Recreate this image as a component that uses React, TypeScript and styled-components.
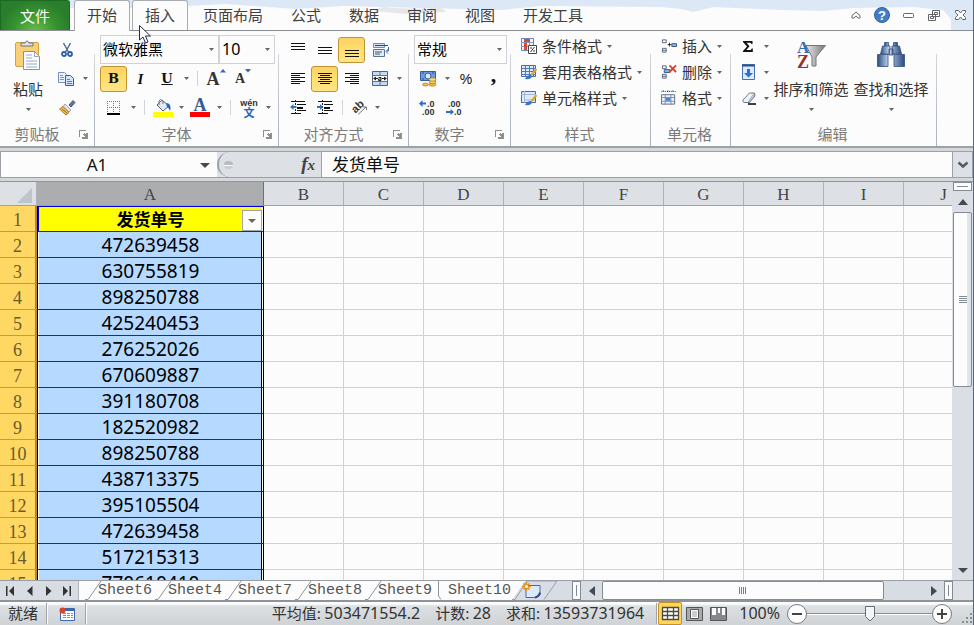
import React from "react";
import styled, { createGlobalStyle, css } from "styled-components";

const ui = `"Noto Sans CJK SC", sans-serif`;
const latin = `"Noto Sans", "Noto Sans CJK SC", sans-serif`;

const Global = createGlobalStyle`
  * { box-sizing: border-box; }
  body { margin: 0; background: #fcfcfc; color: #333; font: 15px/20px ${ui}; overflow: hidden; }
  button, input, select { font: inherit; color: inherit; margin: 0; padding: 0; border: 0; background: none; border-radius: 0; outline: 0; }
  svg { display: block; flex: none; overflow: visible; }
`;

const Window = styled.div`
  display: flex;
  flex-direction: column;
  height: 100vh;
  border-right: 1px solid #5d6678;
  background: #d5d8db;
`;

/* ---------- tab strip ---------- */
const TabStrip = styled.header`
  position: relative;
  display: flex;
  align-items: stretch;
  flex: none;
  height: 31px;
  background: #fcfcfc;
  border-bottom: 1px solid #8b8f94;
`;
const Sky = styled.svg`
  position: absolute;
  inset: 0;
  width: 100%;
  height: 30px;
`;
const FileTab = styled.button`
  position: relative;
  width: 70px;
  margin-right: 3px;
  color: #fff;
  border: 1px solid #1c6a22;
  border-bottom: 0;
  border-radius: 0 3px 0 0;
  background: radial-gradient(ellipse at 50% 110%, #6cc14b 0, #36932f 45%, #2a7d2c 75%);
`;
const RibbonTab = styled.button<{ $look?: "active" | "hover" }>`
  position: relative;
  margin: 0 1px -1px;
  padding: 0 12px 2px;
  border: 1px solid transparent;
  border-bottom: 0;
  color: #404040;
  white-space: nowrap;
  ${(p) => p.$look && css`
    border-color: #a9adb2;
    border-radius: 3px 3px 0 0;
    background: #fcfcfc;
  `}
  ${(p) => p.$look === "hover" && css`
    margin-bottom: 0;
    padding-bottom: 1px;
  `}
`;
const Pointer = styled.svg`
  position: absolute;
  left: 6px;
  top: 24px;
  z-index: 5;
`;
const WindowTools = styled.div`
  position: relative;
  display: flex;
  align-items: center;
  margin-left: auto;
`;
const WindowButton = styled.button`
  display: grid;
  place-items: center;
  width: 26px;
  height: 28px;
`;

/* ---------- ribbon ---------- */
const Ribbon = styled.section`
  display: flex;
  flex: none;
  height: 117px;
  background: #fcfcfc;
  border-bottom: 2px solid #9da1a5;
`;
const Group = styled.div<{ $w: number }>`
  display: flex;
  flex-direction: column;
  flex: 0 0 ${(p) => p.$w}px;
  min-width: 0;
  border-right: 1px solid;
  border-image: linear-gradient(transparent 20%, #d3d6da 21%, #a9b1bb 100%) 1;
`;
const GroupBody = styled.div`
  display: flex;
  height: 92px;
  padding: 2px 0 0 5px;
`;
const GroupFoot = styled.div`
  display: flex;
  align-items: center;
  height: 24px;
  padding-right: 2px;
  color: #7a7a7a;
  text-align: center;
  white-space: nowrap;
`;
const GroupTitle = styled.span`
  flex: 1;
`;
const Stack = styled.div<{ $top?: number }>`
  display: flex;
  flex-direction: column;
  padding-top: ${(p) => p.$top ?? 2}px;
`;
const ToolRow = styled.div<{ $h?: number }>`
  display: flex;
  align-items: center;
  height: ${(p) => p.$h ?? 29}px;
`;
const Tool = styled.button<{ $w?: number; $on?: boolean }>`
  display: grid;
  place-items: center;
  flex: none;
  width: ${(p) => p.$w ?? 27}px;
  height: 26px;
  color: #111;
  ${(p) => p.$on && css`
    border: 1px solid #c29233;
    border-radius: 3px;
    background: linear-gradient(#fbd267, #ffdf6d 50%, #ffe48a);
  `}
`;
const Divider = styled.i<{ $w?: number }>`
  flex: none;
  width: ${(p) => p.$w ?? 12}px;
  height: 15px;
  background: linear-gradient(#d0d4d9, #d0d4d9) center / 1px 100% no-repeat;
`;
const BigButton = styled.button<{ $w: number }>`
  display: flex;
  flex-direction: column;
  align-items: center;
  width: ${(p) => p.$w}px;
  height: 84px;
  padding-top: 7px;
  white-space: nowrap;
`;
const BigIcon = styled.span`
  display: grid;
  place-items: center;
  height: 30px;
`;
const BigLabel = styled.span`
  margin: 9px 0;
`;
const LineButton = styled.button`
  display: flex;
  align-items: center;
  gap: 5px;
  height: 26px;
  padding-left: 5px;
  white-space: nowrap;
`;
const Combo = styled.select<{ $w: number }>`
  appearance: none;
  width: ${(p) => p.$w}px;
  height: 29px;
  padding: 0 0 2px 2px;
  color: #000;
  border: 1px solid #cfd3d8;
  background: #fcfcfc url("data:image/svg+xml,%3Csvg xmlns='http://www.w3.org/2000/svg' width='5' height='3'%3E%3Cpath d='M0 0h5L2.5 3z' fill='%23666'/%3E%3C/svg%3E") right 4px center no-repeat;
`;
const SizeCombo = styled(Combo)`
  font: 16px/20px ${latin};
`;

/* ---------- formula bar ---------- */
const FormulaBar = styled.div`
  display: flex;
  flex: none;
  height: 27px;
  margin-top: 3px;
  border: 1px solid #9ca1a8;
  background: #dde1e6;
`;
const NameBox = styled.div`
  display: flex;
  align-items: center;
  width: 216px;
  background: #fcfcfc;
`;
const NameInput = styled.input`
  width: 192px;
  font: 17px/24px ${latin};
  color: #111;
  text-align: center;
`;
const ArrowButton = styled.button`
  display: grid;
  place-items: center;
  width: 24px;
  height: 24px;
`;
const FunctionArea = styled.div`
  display: flex;
  align-items: center;
  justify-content: space-between;
  width: 105px;
  padding: 0 6px 0 5px;
  border: 1px solid #9ca1a8;
  border-width: 0 1px 0 2px;
  border-radius: 13px 0 0 13px;
`;
const Knob = styled.i`
  width: 9px;
  height: 8px;
  border-radius: 4px;
  background: linear-gradient(#b9bdc2 45%, #fff 46%, #fff 65%, #c9cdd2 66%);
`;
const FxButton = styled.button`
  font: italic bold 19px/22px "Liberation Serif", serif;
  color: #444;
`;
const Sub = styled.small`
  font-size: 15px;
`;
const FormulaInput = styled.input`
  flex: 1;
  min-width: 0;
  padding: 0 0 2px 10px;
  font-size: 17px;
  color: #111;
  background: #fcfcfc;
`;
const ExpandButton = styled.button`
  display: grid;
  place-items: center;
  width: 20px;
  border-left: 1px solid #9ca1a8;
`;

/* ---------- sheet ---------- */
const Sheet = styled.main`
  display: flex;
  flex: 1;
  min-height: 0;
  margin-top: 3px;
  border-top: 1px solid #8f959c;
  background: #fcfcfc;
`;
const GridArea = styled.div`
  flex: 1;
  min-width: 0;
  overflow: hidden;
`;
const Grid = styled.table`
  width: 1064px;
  table-layout: fixed;
  border-collapse: separate;
  border-spacing: 0;
`;
const Col = styled.col<{ $w: number }>`
  width: ${(p) => p.$w}px;
`;
const ColHead = styled.th<{ $on?: boolean }>`
  height: 24px;
  padding: 2px 0 0;
  font: 17px/20px "Liberation Serif", serif;
  color: #444;
  background: ${(p) => (p.$on ? "#abadaf" : "#dde1e6")};
  border-right: 1px solid ${(p) => (p.$on ? "#6d7075" : "#aeb3b9")};
  border-bottom: 1px solid #9ca1a8;
`;
const Corner = styled(ColHead)`
  padding: 0 4px 2px 0;
  vertical-align: bottom;
`;
const CornerMark = styled.svg`
  margin-left: auto;
`;
const RowHead = styled.th`
  height: 26px;
  padding: 2px 0 0;
  font: 18px/20px "Liberation Serif", serif;
  color: #6b5a2a;
  background: #ffd863;
  border-right: 2px solid #b98432;
  border-bottom: 1px solid #c99a3c;
`;
const Cell = styled.td`
  padding: 0;
  border-right: 1px solid #d0d2d4;
  border-bottom: 1px solid #d0d2d4;
`;
const DataCell = styled.td<{ $head?: boolean }>`
  position: relative;
  padding: 0;
  text-align: center;
  color: #000;
  font: ${(p) => (p.$head ? `bold 17px/24px ${ui}` : `19px/24px ${latin}`)};
  background: ${(p) => (p.$head ? "#ffff00" : "#b5d9ff")};
  border-right: 1px solid #000;
  border-bottom: 1px solid #14375e;
  border-left: 1px solid #000;
  box-shadow: ${(p) => (p.$head ? "inset 0 1px #0000e0, inset 1px 0 #0000e0, inset -1px 0 #fff" : "inset -1px 0 #fff, inset -2px 0 #000, inset 1px 0 #fff")};
`;
const FilterButton = styled.button`
  position: absolute;
  right: 1px;
  bottom: 0;
  display: grid;
  place-items: center;
  width: 20px;
  height: 21px;
  border: 1px solid #a3a7ad;
  background: #fcfcfc;
`;
const VScroll = styled.div`
  display: flex;
  flex-direction: column;
  align-items: center;
  flex: 0 0 20px;
  background: #dbdfe5;
`;
const SplitBox = styled.i`
  flex: none;
  width: 19px;
  height: 9px;
  border: 1px solid #858b93;
  background: linear-gradient(#858b93, #858b93) center / 11px 1px no-repeat #fcfcfc;
`;
const ScrollButton = styled.button`
  display: grid;
  place-items: center;
  flex: none;
  width: 21px;
  height: 21px;
`;
const VThumb = styled.div`
  display: grid;
  place-items: center;
  flex: 0 0 44%;
  width: 19px;
  border: 1px solid #858b93;
  border-radius: 2px;
  background: linear-gradient(90deg, #fcfcfc 75%, #dfe4ea 80%);
`;
const Spring = styled.span`
  flex: 1;
`;

/* ---------- sheet tabs ---------- */
const SheetBar = styled.nav`
  display: flex;
  align-items: stretch;
  flex: none;
  height: 22px;
  border-top: 1px solid #9a9fa6;
  border-bottom: 2px solid #8e939c;
  background: #d8dce3;
`;
const Steps = styled.div`
  display: flex;
  width: 79px;
  padding: 0 1px;
  border-right: 1px solid #aeb3b9;
`;
const StepButton = styled.button`
  display: grid;
  place-items: center;
  width: 19px;
`;
const Tabs = styled.div`
  display: flex;
  padding-left: 6px;
  background: #fcfcfc;
`;
const SheetTab = styled.button<{ $on?: boolean }>`
  display: flex;
  width: ${(p) => (p.$on ? 77 : 70)}px;
  font: 15px/20px "Liberation Mono", monospace;
  color: #555;
`;
const TabName = styled.span`
  margin-left: -3px;
`;
const AddSheet = styled.button`
  flex: none;
  width: 60px;
`;
const HScroll = styled.div`
  display: flex;
  align-items: center;
  flex: 1;
  min-width: 0;
`;
const HThumb = styled.div`
  display: grid;
  place-items: center;
  flex: 0 0 74%;
  height: 19px;
  border: 1px solid #858b93;
  border-radius: 2px;
  background: #fcfcfc;
`;
const HSplit = styled.i`
  flex: none;
  width: 9px;
  height: 19px;
  border: 1px solid #858b93;
  background: linear-gradient(#858b93, #858b93) center / 1px 11px no-repeat #fcfcfc;
`;
const ScrollCorner = styled.span`
  width: 20px;
  background: #dde1e6;
`;

/* ---------- status bar ---------- */
const StatusBar = styled.footer`
  display: flex;
  align-items: center;
  flex: none;
  height: 23px;
  color: #333;
  white-space: nowrap;
  background: linear-gradient(#fcfcfc 0 2px, #dde0e3 4px, #cfd3d6);
`;
const Mode = styled.span`
  padding: 0 8px 2px;
`;
const StatusRule = styled.i`
  width: 2px;
  height: 21px;
  border-left: 1px solid #9fa4aa;
  background: #fcfcfc;
`;
const Macro = styled.button`
  display: grid;
  place-items: center;
  width: 37px;
`;
const Figures = styled.div`
  display: flex;
  gap: 15px;
  margin: 0 12px 0 auto;
  padding-bottom: 2px;
`;
const Num = styled.span`
  font: 16px/20px ${latin};
`;
const ViewButton = styled.button<{ $on?: boolean }>`
  display: grid;
  place-items: center;
  width: 24px;
  height: 23px;
  ${(p) => p.$on && css`
    border: 1px solid #c4902c;
    border-radius: 2px;
    background: #ffd65a;
  `}
`;
const ZoomLabel = styled.label`
  margin: 0 7px 0 9px;
  padding-bottom: 2px;
  font: 16px/20px ${latin};
`;
const ZoomButton = styled.button`
  display: grid;
  place-items: center;
  width: 20px;
  height: 20px;
  border: 1px solid #777c83;
  border-radius: 50%;
  background: #fcfcfc;
`;
const ZoomRange = styled.input`
  appearance: none;
  width: 125px;
  height: 20px;
  background: linear-gradient(#858a90 50%, #fff 50%) center / 100% 2px no-repeat;
  &::-webkit-slider-thumb {
    appearance: none;
    width: 12px;
    height: 16px;
    background: url("data:image/svg+xml,%3Csvg xmlns='http://www.w3.org/2000/svg' width='12' height='16'%3E%3Cpath d='M1.5.5h9v10L6 15l-4.500-4.500z' fill='%23f4f6f8' stroke='%23666b72'/%3E%3C/svg%3E") no-repeat;
  }
`;
const Grip = styled.svg`
  align-self: flex-end;
  margin-left: 9px;
`;

/* ---------- icons ---------- */
const Caret = ({ w = 5 }: { w?: number }) => (
  <svg width={w} height={w === 5 ? 3 : 4} viewBox="0 0 5 3" preserveAspectRatio="none"><path d="M0 0h5L2.500 3z" fill="#666" /></svg>
);
const Arrow = ({ dir }: { dir: "up" | "down" | "left" | "right" }) => {
  const d = { up: "M6 3l5 6H1z", down: "M1 4h10L6 9z", left: "M9 1v10L3 6z", right: "M3 1v10l6-5z" }[dir];
  return <svg width="12" height="12" viewBox="0 0 12 12"><path d={d} fill="#444a52" /></svg>;
};
const Launcher = () => (
  <svg width="9" height="9" viewBox="0 0 9 9" shapeRendering="crispEdges">
    <path d="M0 0h7v1H1v6H0zM4 4l1-1 2 2V3h2v6H3V7h3z" fill="#8b8f94" />
  </svg>
);
const Lines = ({ rows, y = 0 }: { rows: [number, number][]; y?: number }) => (
  <svg width="16" height="22" viewBox="0 0 16 22" shapeRendering="crispEdges">
    {rows.map(([x, w], i) => <path key={i} d={`M${x} ${y + i * (rows.length < 4 ? 3 : 2)}h${w}v1h-${w}z`} fill="#111" />)}
  </svg>
);
const Paste = () => (
  <svg width="26" height="30" viewBox="0 0 26 30">
    <rect x=".5" y="2.500" width="23" height="24" rx="1.500" fill="#f9d077" stroke="#d6a044" />
    <path d="M6 6V3h4q2-4 4 0h4v3z" fill="#dfe2e6" stroke="#6e747c" />
    <path d="M8.500 11.500h11l5 5v13h-16z" fill="#fff" stroke="#8292ac" />
    <path d="M19.500 11.500v5h5M11 15h6M11 18h6M11 21h11M11 24h11M11 27h11" fill="none" stroke="#91a9cb" />
  </svg>
);
const Scissors = () => (
  <svg width="12" height="14" viewBox="0 0 12 14" fill="none">
    <path d="M2.500 0l5 9M9.500 0l-5 9" stroke="#536b8c" strokeWidth="1.500" />
    <circle cx="3" cy="11" r="2" stroke="#2a5fb0" strokeWidth="1.800" />
    <circle cx="9" cy="11" r="2" stroke="#2a5fb0" strokeWidth="1.800" />
  </svg>
);
const Copy = () => (
  <svg width="17" height="14" viewBox="0 0 17 14">
    <path d="M.5.500h6l2 2v8h-8z" fill="#eaf2fd" stroke="#7590bb" />
    <path d="M2 3.500h3M2 5.500h4M2 7.500h4" stroke="#6d98d8" />
    <path d="M7.500 3.500h5l3 3v7h-8z" fill="#d3e4fa" stroke="#365f9f" />
    <path d="M9 7.500h3M9 9.500h5M9 11.500h5" stroke="#5183cd" />
  </svg>
);
const Brush = () => (
  <svg width="17" height="16" viewBox="0 0 17 16">
    <path d="M10 5l4-4.500 2 2L12 7z" fill="#5878a8" stroke="#41597d" />
    <path d="M6 4l6 6-2 2-6-5z" fill="#e2e6ea" stroke="#7e8691" strokeWidth=".7" />
    <path d="M4 6.500l6 6L7 15 .5 9z" fill="#f4c15a" stroke="#a87427" />
    <path d="M3 9l5 4" stroke="#936024" />
  </svg>
);
const Bold = styled.b`
  font: bold 13px/20px "DejaVu Serif", serif;
`;
const Ital = styled.i`
  font: italic bold 15px/20px "Liberation Serif", serif;
`;
const Under = styled.u`
  font: bold 13px/18px "DejaVu Serif", serif;
`;
const Letter = styled.b<{ $size: number }>`
  font: bold ${(p) => p.$size}px/20px "Liberation Serif", serif;
  color: #333;
`;
const FontStep = styled.span`
  display: flex;
  align-items: center;
`;
const Tip = styled.svg`
  align-self: flex-start;
`;
const Percent = styled.span`
  font: 14px/20px "Liberation Sans", sans-serif;
`;
const Comma = styled.b`
  padding-bottom: 8px;
  font: bold 22px/16px "Liberation Serif", serif;
`;
const Stepper = ({ up }: { up?: boolean }) => (
  <FontStep>
    <Letter $size={up ? 18 : 14}>A</Letter>
    <Tip width="6" height="4" viewBox="0 0 6 4"><path d={up ? "M3 0l3 3.500H0z" : "M0 0h6L3 3.500z"} fill="#3a66b0" /></Tip>
  </FontStep>
);
const Borders = () => (
  <svg width="14" height="14" viewBox="0 0 14 14" fill="none" shapeRendering="crispEdges">
    <path d="M0 .5h13M0 6.500h13M.5 0v12M6.500 0v12M12.500 0v12" stroke="#777" strokeDasharray="1 1" />
    <path d="M0 13h13" stroke="#000" strokeWidth="2" />
  </svg>
);
const Fill = () => (
  <svg width="20" height="19" viewBox="0 0 20 19">
    <path d="M4 7l5-5 7 6-6 5z" fill="#e3eaf3" stroke="#4e5f7a" />
    <path d="M6 7V3q1-3 4 0v3" fill="none" stroke="#68758a" />
    <path d="M13 5q6 0 4 8-1-3-3-4z" fill="#2b66bd" />
    <path d="M0 14h20v5H0z" fill="#ff0" />
  </svg>
);
const ColorBar = styled.span`
  display: block;
  width: 20px;
  border-bottom: 5px solid #f00;
  color: #375a93;
  font: bold 18px/14px "Liberation Serif", serif;
`;
const Wen = styled.span`
  display: grid;
  font: bold 9px/8px "Liberation Sans", sans-serif;
  color: #333;
`;
const WenChar = styled.b`
  font: bold 11px/10px ${ui};
  color: #2660b8;
`;
const Wrap = () => (
  <svg width="17" height="16" viewBox="0 0 17 16" fill="none">
    <path d="M.5 1.500h11v4H.5z" fill="#d5e3f5" stroke="#6f8cb0" />
    <path d="M2 3.500h13" stroke="#454545" />
    <path d="M.5 7.500h11v7H.5z" fill="#dceafb" stroke="#56759c" />
    <path d="M2 10h7M2 12h5" stroke="#555" />
    <path d="M15.500 5v4h-2M15.500 7L13 9.500l2 2" stroke="#3c68aa" />
  </svg>
);
const Merge = () => (
  <svg width="16" height="15" viewBox="0 0 16 15">
    <path d="M.5.500h15v14H.5z" fill="#c5dbf5" stroke="#4c6384" />
    <path d="M0 4.500h16M0 10.500h16M8 0v4M8 11v4" stroke="#5c7699" />
    <path d="M1 5h14v5H1z" fill="#fff" />
    <path d="M1 7.500l3-2v4zM15 7.500l-3-2v4zM4 7h2v1H4zM10 7h2v1h-2z" fill="#222" />
    <path d="M6.500 6.500h2.500v3H6.500V8H9" fill="none" stroke="#222" />
  </svg>
);
const Indent = ({ out }: { out?: boolean }) => (
  <svg width="16" height="15" viewBox="0 0 16 15">
    <path d="M1 1.500h14M7 4.500h9M7 10.500h9M1 13.500h10" stroke="#111" shapeRendering="crispEdges" />
    <path d="M7 7.500h6" stroke="#111" strokeWidth="2" shapeRendering="crispEdges" />
    <path d="M5.500 0v15" stroke="#222" strokeDasharray="2 1" />
    <path d={out ? "M0 7l3.500-3v2h3v2h-3v2z" : "M6 7L3 4v2H0v2h3v2z"} fill="#3271c4" />
  </svg>
);
const Rotate = () => (
  <svg width="16" height="15" viewBox="0 0 16 15">
    <text x="0" y="11" transform="rotate(-45 5 8)" fontFamily="Liberation Sans" fontWeight="bold" fontSize="11" fill="#333">ab</text>
    <path d="M6 14.500L14 7M11 7h3.500v3" fill="none" stroke="#777" />
  </svg>
);
const Money = () => (
  <svg width="17" height="16" viewBox="0 0 17 16">
    <path d="M.5.500h15v9H.5z" fill="#6f9be0" stroke="#365e9d" />
    <ellipse cx="8" cy="5" rx="3" ry="3" fill="#dce9fa" stroke="#365e9d" />
    <path d="M2 2h2M2 8h2M12 2h2" stroke="#2c4f89" />
    <ellipse cx="12.500" cy="13.500" rx="3.500" ry="1.700" fill="#f1bb45" stroke="#9d6a14" strokeWidth=".6" />
    <ellipse cx="12.500" cy="11" rx="3.500" ry="1.700" fill="#f8cd63" stroke="#9d6a14" strokeWidth=".6" />
    <ellipse cx="12.500" cy="8.500" rx="3.500" ry="1.700" fill="#fbdc84" stroke="#9d6a14" strokeWidth=".6" />
    <ellipse cx="5.500" cy="13.500" rx="3" ry="1.500" fill="#f1bb45" stroke="#9d6a14" strokeWidth=".6" />
  </svg>
);
const Decimal = ({ less }: { less?: boolean }) => (
  <svg width="18" height="15" viewBox="0 0 18 15">
    <g fontFamily="Liberation Sans" fontWeight="bold" fontSize="9" fill="#333">
      <text x={less ? 2 : 8} y="7">{less ? ".00" : ".0"}</text>
      <text x={less ? 8 : 3} y="15">{less ? ".0" : ".00"}</text>
    </g>
    <path d={less ? "M8 12L4.500 9v2H0v2h4.500v2z" : "M0 3.500L3.500 0v2.500H7v2H3.500V7z"} fill="#2f6cc2" />
  </svg>
);
const Conditional = () => (
  <svg width="16" height="16" viewBox="0 0 16 16">
    <path d="M.5.500h12v12H.5z" fill="#f3f7fc" stroke="#6585b5" />
    <path d="M0 4.500h12M0 8.500h12M4.500 0v12M8.500 0v12" stroke="#7d9ccb" />
    <path d="M3 1h6v3H3zM3 5h3v7H3z" fill="#d94b31" />
    <path d="M7.500 7.500h8v8h-8z" fill="#fff" stroke="#444" />
    <path d="M9 10h2M12 13h2M9.500 14l4-5" stroke="#333" />
  </svg>
);
const TableStyle = ({ plain }: { plain?: boolean }) => (
  <svg width="16" height="16" viewBox="0 0 16 16">
    <path d="M.5 1.500h14v11H.5z" fill="#dfeafa" stroke="#466ca8" />
    {plain
      ? <path d="M0 4.500h15M3.500 1v12M4 10h10" stroke="#9db7dc" />
      : <path d="M0 4.500h15M0 7.500h15M0 10.500h15M4.500 1v12M8.500 1v12M12.500 1v12" stroke="#4f79b8" />}
    <path d="M15.500 5l-5 6" stroke="#dba432" strokeWidth="2" />
    <path d="M4 15q2-4 6-4l1 1q-1 4-7 3z" fill="#3b73c4" />
  </svg>
);
const CellsIcon = ({ kind }: { kind: "insert" | "delete" | "format" }) => (
  <svg width="16" height="16" viewBox="0 0 17 16">
    {kind === "format" ? (
      <>
        <path d="M.5 1h16M2.500 0v2M7.500 0v2M12.500 0v2" stroke="#222" strokeDasharray="1 1" />
        <path d="M.5 4.500h14v10H.5z" fill="#f0f5fb" stroke="#5c6b80" />
        <path d="M0 7.500h15M0 11.500h15M4.500 4v11M10.500 4v11" stroke="#7c8ca4" />
        <path d="M5 8h5v3H5z" fill="#4685d8" />
      </>
    ) : (
      <>
        <path d="M1.500 1.500h4v3h-4zM1.500 10.500h4v4h-4zM1.500 12.500h4" fill="#fff" stroke="#51617a" />
        {kind === "insert" ? (
          <>
            <path d="M7 6.500h4M9 4.500v4" stroke="#222" />
            <path d="M11.500 5.500h5v3h-5z" fill="#8fb6e8" stroke="#34547f" />
          </>
        ) : (
          <>
            <path d="M3.500 5.500h6v3h-6z" fill="#8fb6e8" stroke="#34547f" />
            <path d="M9 1l7 7M16 1L9 8" stroke="#e0402a" strokeWidth="2" />
          </>
        )}
      </>
    )}
  </svg>
);
const Sigma = () => (
  <svg width="11" height="11" viewBox="0 0 11 11"><path d="M0 0h9.500v3h-1L7.500 1.700H3.500L6.500 5.300 3.300 9h4.500l1-1.500h1V11H0v-1l4-4.500L0 1z" fill="#111" /></svg>
);
const FillDown = () => (
  <svg width="13" height="16" viewBox="0 0 13 16">
    <path d="M.5.500h12v15H.5z" fill="#dcebfb" stroke="#4472b4" />
    <path d="M0 1.500h13" stroke="#2c528d" strokeWidth="2" />
    <path d="M5 5h3v4h3l-4.500 4.500L2 9h3z" fill="#2c6fd0" />
  </svg>
);
const Eraser = () => (
  <svg width="14" height="13" viewBox="0 0 14 13">
    <path d="M7.500 1h5L6 10.500H2q-2-1-1-2.500z" fill="#eef1f7" stroke="#727a8d" />
    <path d="M12.500 1l.5 3-6 7-1-1" fill="#bcc5d8" stroke="#727a8d" />
    <path d="M6 12h8" stroke="#000" strokeWidth="1.500" />
  </svg>
);
const SortFilter = () => (
  <svg width="29" height="30" viewBox="0 0 29 30">
    <defs><linearGradient id="steel"><stop offset="0" stopColor="#e8e8e8" /><stop offset="1" stopColor="#75787d" /></linearGradient></defs>
    <path d="M9 5.500h19.500L19 17v9h-4v-9z" fill="url(#steel)" stroke="#72767b" />
    <text x="0" y="13" fontFamily="Liberation Serif" fontWeight="bold" fontSize="17" fill="#356bb3">A</text>
    <text x="0" y="28" fontFamily="Liberation Serif" fontWeight="bold" fontSize="18" fill="#963330">Z</text>
  </svg>
);
const Binoculars = () => (
  <svg width="28" height="26" viewBox="0 0 28 26">
    <defs>
      <linearGradient id="lens"><stop offset="0" stopColor="#2c4d81" /><stop offset=".4" stopColor="#bed5f2" /><stop offset="1" stopColor="#2b4a7c" /></linearGradient>
    </defs>
    <g fill="url(#lens)" stroke="#334f7b" strokeWidth=".8">
      <path d="M7.500.500h4v4h-4zM16.500.500h4v4h-4z" />
      <path d="M5.500 4h7.500v8H3.500zM15 4h7.500l2 8H15z" />
      <path d="M12 7h4v6h-4z" />
      <path d="M.5 12.500H11v12H.5zM17 12.500h10.500v12H17z" />
    </g>
  </svg>
);

const Split = ({ label, icon, w, cw = 10 }: { label: string; icon: React.ReactNode; w: number; cw?: number }) => (
  <>
    <Tool $w={w} aria-label={label}>{icon}</Tool>
    <Tool $w={cw} aria-label={`${label} 选项`}><Caret /></Tool>
  </>
);
const RibbonGroup = ({ w, title, launch, children }: { w: number; title: string; launch?: boolean; children: React.ReactNode }) => (
  <Group $w={w} role="group" aria-label={title}>
    <GroupBody>{children}</GroupBody>
    <GroupFoot>
      <GroupTitle>{title}</GroupTitle>
      {launch && <Tool $w={18} aria-label={`${title} 设置`}><Launcher /></Tool>}
    </GroupFoot>
  </Group>
);

const full: [number, number][] = [[1, 14], [1, 14], [1, 14]];
const orders = ["472639458", "630755819", "898250788", "425240453", "276252026", "670609887", "391180708", "182520982", "898250788", "438713375", "395105504", "472639458", "517215313", "770610410"];
const letters = ["B", "C", "D", "E", "F", "G", "H", "I", "J", "K"];
const Blank = () => <>{letters.map((l) => <Cell key={l} />)}</>;

const Slant = ({ shape = "full" }: { shape?: "full" | "edge" }) => (
  <svg width="16" height="19" viewBox="0 0 16 19" fill="none">
    {shape === "full"
      ? <path d="M0 18.500h3L16 0" stroke="#8f949b" />
      : <path d="M3.500 0v15l2.500 3.500" stroke="#8f949b" />}
  </svg>
);

export default function App() {
  return (
    <Window>
      <Global />
      <TabStrip role="tablist">
        <Sky viewBox="0 0 974 30" preserveAspectRatio="none" aria-hidden="true">
          <path d="M0 0h974v30H952V19l-8-9-30-3-60 1-30 3-40-1-70-3-20 5-12-3-20-2-120-1-40 4-160-4-46 3-70-5-76 4H0z" fill="#dce8f6" />
          <path d="M374 11q8-6 18-3l36 1q14-4 18 3l-40 2z" fill="#e6e7e9" />
        </Sky>
        <FileTab>文件</FileTab>
        <RibbonTab role="tab" aria-selected="true" $look="active">开始</RibbonTab>
        <RibbonTab role="tab" $look="hover">
          插入
          <Pointer width="13" height="19" viewBox="0 0 13 19" aria-hidden="true">
            <path d="M.5.500v14.500l3.500-3 2.500 6 2.500-1-2.500-6h5z" fill="#fff" stroke="#25294a" />
          </Pointer>
        </RibbonTab>
        {["页面布局", "公式", "数据", "审阅", "视图", "开发工具"].map((t) => <RibbonTab key={t} role="tab">{t}</RibbonTab>)}
        <WindowTools>
          <WindowButton aria-label="折叠功能区">
            <svg width="10" height="8" viewBox="0 0 10 8"><path d="M1 4.500L5 1l4 3.500V7H7L5 5 3 7H1z" fill="#fff" stroke="#666" /></svg>
          </WindowButton>
          <WindowButton aria-label="帮助">
            <svg width="16" height="16" viewBox="0 0 16 16"><circle cx="8" cy="8" r="7.500" fill="#447bc5" stroke="#2e5f9f" /><text x="8" y="12.500" textAnchor="middle" fontFamily="Liberation Sans" fontWeight="bold" fontSize="13" fill="#fff">?</text></svg>
          </WindowButton>
          <WindowButton aria-label="最小化">
            <svg width="11" height="5" viewBox="0 0 11 5"><rect x=".5" y=".5" width="10" height="4" rx="1" fill="#fff" stroke="#666" /></svg>
          </WindowButton>
          <WindowButton aria-label="还原">
            <svg width="12" height="11" viewBox="0 0 12 11" fill="#fff" stroke="#5f646b"><path d="M4.500.500h7v6h-7zM6.500 2.500h3v2h-3zM.5 4.500h7v6h-7zM2.500 6.500h3v2h-3z" /></svg>
          </WindowButton>
          <WindowButton aria-label="关闭">
            <svg width="11" height="10" viewBox="0 0 11 10"><path d="M.5.500h3l2 2.500 2-2.500h3v2L8 5l2.500 2.500v2h-3l-2-2.500-2 2.500h-3v-2L3 5 .5 2.500z" fill="#fff" stroke="#666" /></svg>
          </WindowButton>
        </WindowTools>
      </TabStrip>

      <Ribbon>
        <RibbonGroup w={95} title="剪贴板" launch>
          <BigButton $w={46}><BigIcon><Paste /></BigIcon><BigLabel>粘贴</BigLabel><Caret /></BigButton>
          <Stack>
            <ToolRow><Tool $w={32} aria-label="剪切"><Scissors /></Tool></ToolRow>
            <ToolRow><Split label="复制" icon={<Copy />} w={30} cw={8} /></ToolRow>
            <ToolRow><Tool $w={32} aria-label="格式刷"><Brush /></Tool></ToolRow>
          </Stack>
        </RibbonGroup>

        <RibbonGroup w={184} title="字体" launch>
          <Stack>
            <ToolRow>
              <Combo $w={119} aria-label="字体"><option>微软雅黑</option></Combo>
              <SizeCombo $w={56} aria-label="字号"><option>10</option></SizeCombo>
            </ToolRow>
            <ToolRow>
              <Tool $on aria-label="加粗"><Bold>B</Bold></Tool>
              <Tool aria-label="倾斜"><Ital>I</Ital></Tool>
              <Split label="下划线" icon={<Under>U</Under>} w={26} cw={12} />
              <Divider $w={10} />
              <Tool $w={28} aria-label="增大字号"><Stepper up /></Tool>
              <Tool $w={26} aria-label="减小字号"><Stepper /></Tool>
            </ToolRow>
            <ToolRow>
              <Split label="边框" icon={<Borders />} w={28} />
              <Divider />
              <Split label="填充颜色" icon={<Fill />} w={26} />
              <Split label="字体颜色" icon={<ColorBar>A</ColorBar>} w={28} />
              <Divider />
              <Split label="拼音" icon={<Wen>wén<WenChar>文</WenChar></Wen>} w={26} cw={12} />
            </ToolRow>
          </Stack>
        </RibbonGroup>

        <RibbonGroup w={130} title="对齐方式" launch>
          <Stack>
            <ToolRow>
              <Tool aria-label="顶端对齐"><Lines rows={full} y={4} /></Tool>
              <Tool aria-label="垂直居中"><Lines rows={full} y={8} /></Tool>
              <Tool $on aria-label="底端对齐"><Lines rows={full} y={11} /></Tool>
              <Tool $w={32} aria-label="自动换行"><Wrap /></Tool>
            </ToolRow>
            <ToolRow>
              <Tool aria-label="左对齐"><Lines rows={[[1, 14], [1, 9], [1, 14], [1, 9], [1, 14], [1, 9]]} y={5} /></Tool>
              <Tool $on aria-label="居中"><Lines rows={[[1, 14], [3, 10], [1, 14], [3, 10], [1, 14], [3, 10]]} y={5} /></Tool>
              <Tool aria-label="右对齐"><Lines rows={[[1, 14], [6, 9], [1, 14], [6, 9], [1, 14], [6, 9]]} y={5} /></Tool>
              <Split label="合并后居中" icon={<Merge />} w={30} cw={8} />
            </ToolRow>
            <ToolRow>
              <Tool aria-label="减少缩进量"><Indent out /></Tool>
              <Tool aria-label="增加缩进量"><Indent /></Tool>
              <Divider $w={9} />
              <Split label="方向" icon={<Rotate />} w={26} cw={8} />
            </ToolRow>
          </Stack>
        </RibbonGroup>

        <RibbonGroup w={102} title="数字" launch>
          <Stack>
            <ToolRow><Combo $w={93} aria-label="数字格式"><option>常规</option></Combo></ToolRow>
            <ToolRow>
              <Split label="会计数字格式" icon={<Money />} w={28} />
              <Tool $w={28} aria-label="百分比"><Percent>%</Percent></Tool>
              <Tool aria-label="千位分隔"><Comma>,</Comma></Tool>
            </ToolRow>
            <ToolRow>
              <Tool aria-label="增加小数位数"><Decimal /></Tool>
              <Tool aria-label="减少小数位数"><Decimal less /></Tool>
            </ToolRow>
          </Stack>
        </RibbonGroup>

        <RibbonGroup w={140} title="样式">
          <Stack $top={0}>
            <LineButton><Conditional />条件格式<Caret /></LineButton>
            <LineButton><TableStyle />套用表格格式<Caret /></LineButton>
            <LineButton><TableStyle plain />单元格样式<Caret /></LineButton>
          </Stack>
        </RibbonGroup>

        <RibbonGroup w={80} title="单元格">
          <Stack $top={0}>
            <LineButton><CellsIcon kind="insert" />插入<Caret /></LineButton>
            <LineButton><CellsIcon kind="delete" />删除<Caret /></LineButton>
            <LineButton><CellsIcon kind="format" />格式<Caret /></LineButton>
          </Stack>
        </RibbonGroup>

        <RibbonGroup w={206} title="编辑">
          <Stack $top={0}>
            <ToolRow $h={26}><Split label="求和" icon={<Sigma />} w={25} /></ToolRow>
            <ToolRow $h={26}><Split label="填充" icon={<FillDown />} w={25} /></ToolRow>
            <ToolRow $h={26}><Split label="清除" icon={<Eraser />} w={25} /></ToolRow>
          </Stack>
          <BigButton $w={80}><BigIcon><SortFilter /></BigIcon><BigLabel>排序和筛选</BigLabel><Caret /></BigButton>
          <BigButton $w={80}><BigIcon><Binoculars /></BigIcon><BigLabel>查找和选择</BigLabel><Caret /></BigButton>
        </RibbonGroup>
      </Ribbon>

      <FormulaBar>
        <NameBox>
          <NameInput aria-label="名称框" defaultValue="A1" />
          <ArrowButton aria-label="名称列表"><Arrow dir="down" /></ArrowButton>
        </NameBox>
        <FunctionArea><Knob /><FxButton aria-label="插入函数">f<Sub>x</Sub></FxButton></FunctionArea>
        <FormulaInput aria-label="编辑栏" defaultValue="发货单号" />
        <ExpandButton aria-label="展开编辑栏">
          <svg width="12" height="8" viewBox="0 0 12 8"><path d="M1.500 1.500L6 5.500l4.500-4" fill="none" stroke="#555b66" strokeWidth="2.500" /></svg>
        </ExpandButton>
      </FormulaBar>

      <Sheet>
        <GridArea>
          <Grid>
            <colgroup>
              <Col $w={37} /><Col $w={227} />
              {letters.map((l) => <Col key={l} $w={80} />)}
            </colgroup>
            <thead>
              <tr>
                <Corner><CornerMark width="15" height="15" viewBox="0 0 15 15"><path d="M15 0v15H0z" fill="#bfc4ca" /></CornerMark></Corner>
                <ColHead $on>A</ColHead>
                {letters.map((l) => <ColHead key={l}>{l}</ColHead>)}
              </tr>
            </thead>
            <tbody>
              <tr>
                <RowHead>1</RowHead>
                <DataCell $head>发货单号<FilterButton aria-label="筛选"><Caret w={8} /></FilterButton></DataCell>
                <Blank />
              </tr>
              {orders.map((n, i) => (
                <tr key={i}><RowHead>{i + 2}</RowHead><DataCell>{n}</DataCell><Blank /></tr>
              ))}
            </tbody>
          </Grid>
        </GridArea>
        <VScroll>
          <SplitBox />
          <ScrollButton aria-label="向上滚动"><Arrow dir="up" /></ScrollButton>
          <VThumb><svg width="8" height="7" viewBox="0 0 8 7"><path d="M0 .5h8M0 2.500h8M0 4.500h8M0 6.500h8" stroke="#858b93" /></svg></VThumb>
          <Spring />
          <ScrollButton aria-label="向下滚动"><Arrow dir="down" /></ScrollButton>
        </VScroll>
      </Sheet>

      <SheetBar>
        <Steps>
          <StepButton aria-label="第一张"><svg width="9" height="10" viewBox="0 0 9 10"><path d="M0 0h1.500v10H0zM8 0v10L3 5z" fill="#333" /></svg></StepButton>
          <StepButton aria-label="上一张"><svg width="6" height="10" viewBox="0 0 6 10"><path d="M5.500 0v10L0 5z" fill="#333" /></svg></StepButton>
          <StepButton aria-label="下一张"><svg width="6" height="10" viewBox="0 0 6 10"><path d="M0 0v10l5.500-5z" fill="#333" /></svg></StepButton>
          <StepButton aria-label="最后一张"><svg width="9" height="10" viewBox="0 0 9 10"><path d="M0 0v10l5-5zM6.500 0H8v10H6.500z" fill="#333" /></svg></StepButton>
        </Steps>
        <Tabs>
          {["Sheet6", "Sheet4", "Sheet7", "Sheet8", "Sheet9"].map((s) => (
            <SheetTab key={s}><Slant /><TabName>{s}</TabName></SheetTab>
          ))}
          <SheetTab $on><Slant shape="edge" /><TabName>Sheet10</TabName></SheetTab>
        </Tabs>
        <AddSheet aria-label="插入工作表">
          <svg width="52" height="19" viewBox="0 0 52 19">
            <path d="M0 0h13L0 19z" fill="#fcfcfc" />
            <path d="M0 18.500h3L15 0h30L32 18.500" fill="#d9dde7" stroke="#9a9fa8" />
            <path d="M14 4.500h14v9l-3 3H14z" fill="#dbe9fb" stroke="#54698a" />
            <path d="M23 16.500q4-1 5-5" fill="none" stroke="#2b4e86" strokeWidth="2" />
            <path d="M14.500 1v9M10 5.500h9M11.500 2.500l6 6M17.500 2.500l-6 6" stroke="#dd8f21" strokeWidth="1.500" />
            <circle cx="14.500" cy="5.500" r="1.500" fill="#fff" />
          </svg>
        </AddSheet>
        <HScroll>
          <HSplit />
          <ScrollButton aria-label="向左滚动"><Arrow dir="left" /></ScrollButton>
          <HThumb><svg width="7" height="7" viewBox="0 0 7 7"><path d="M.5 0v7M2.500 0v7M4.500 0v7M6.500 0v7" stroke="#777d85" /></svg></HThumb>
          <Spring />
          <ScrollButton aria-label="向右滚动"><Arrow dir="right" /></ScrollButton>
          <HSplit />
        </HScroll>
        <ScrollCorner />
      </SheetBar>

      <StatusBar>
        <Mode>就绪</Mode>
        <StatusRule />
        <Macro aria-label="录制宏">
          <svg width="16" height="14" viewBox="0 0 16 14">
            <path d="M1.500 1.500h14v12h-14z" fill="#fff" stroke="#3d68b0" />
            <path d="M2 3h13" stroke="#3d68b0" strokeWidth="2" />
            <path d="M4 6.500h10M4 8.500h10M4 10.500h10" stroke="#6f94cd" strokeDasharray="3 1" />
            <circle cx="3.500" cy="3.500" r="3" fill="#d8452c" />
          </svg>
        </Macro>
        <StatusRule />
        <Figures>
          <span>平均值: <Num>503471554.2</Num></span>
          <span>计数: <Num>28</Num></span>
          <span>求和: <Num>13593731964</Num></span>
        </Figures>
        <StatusRule />
        <ViewButton $on aria-label="普通">
          <svg width="17" height="13" viewBox="0 0 17 13"><path d="M.5.500h16v12H.5zM0 4.500h17M0 8.500h17M5.500 0v13M11.500 0v13" fill="#fff" stroke="#4f4a3c" strokeWidth="1.300" /></svg>
        </ViewButton>
        <ViewButton aria-label="页面布局">
          <svg width="17" height="14" viewBox="0 0 17 14"><path d="M.5.500h16v13H.5z" fill="#a8abb0" stroke="#555" /><path d="M4.500 2.500h8v9h-8z" fill="#fff" stroke="#555" /><path d="M6 5h5M6 7h5M6 9h5" stroke="#999" /></svg>
        </ViewButton>
        <ViewButton aria-label="分页预览">
          <svg width="17" height="14" viewBox="0 0 17 14"><path d="M.5.500h16v13H.5z" fill="#85888e" stroke="#555" /><path d="M2 1h4v7H2zM8 1h2v5H8zM12 1h3v7h-3z" fill="#fff" /></svg>
        </ViewButton>
        <ZoomLabel htmlFor="zoom">100%</ZoomLabel>
        <ZoomButton aria-label="缩小"><svg width="10" height="10" viewBox="0 0 10 10"><path d="M0 5h10" stroke="#444" strokeWidth="2" /></svg></ZoomButton>
        <ZoomRange id="zoom" type="range" min="0" max="100" defaultValue="50" />
        <ZoomButton aria-label="放大"><svg width="10" height="10" viewBox="0 0 10 10"><path d="M0 5h10M5 0v10" stroke="#444" strokeWidth="2" /></svg></ZoomButton>
        <Grip width="12" height="12" viewBox="0 0 12 12"><path d="M9 0h2v2H9zM5 4h2v2H5zM9 4h2v2H9zM1 8h2v2H1zM5 8h2v2H5zM9 8h2v2H9z" fill="#8b9097" /></Grip>
      </StatusBar>
    </Window>
  );
}
